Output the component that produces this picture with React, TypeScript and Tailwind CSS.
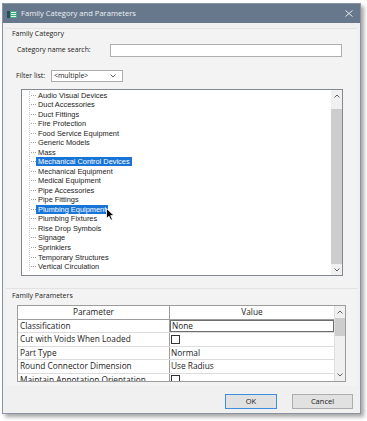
import React from "react";

const categories = [
  "Audio Visual Devices",
  "Duct Accessories",
  "Duct Fittings",
  "Fire Protection",
  "Food Service Equipment",
  "Generic Models",
  "Mass",
  "Mechanical Control Devices",
  "Mechanical Equipment",
  "Medical Equipment",
  "Pipe Accessories",
  "Pipe Fittings",
  "Plumbing Equipment",
  "Plumbing Fixtures",
  "Rise Drop Symbols",
  "Signage",
  "Sprinklers",
  "Temporary Structures",
  "Vertical Circulation",
];

const selected = ["Mechanical Control Devices", "Plumbing Equipment"];

type Param = { name: string; value?: string; check?: boolean; boxed?: boolean };

const params: Param[] = [
  { name: "Classification", value: "None", boxed: true },
  { name: "Cut with Voids When Loaded", check: true },
  { name: "Part Type", value: "Normal" },
  { name: "Round Connector Dimension", value: "Use Radius" },
  { name: "Maintain Annotation Orientation", check: true },
];

const ui = { fontFamily: '"Open Sans", "Noto Sans", sans-serif' };
const tree = { fontFamily: '"Liberation Sans", Arial, sans-serif' };

const Chevron = ({ up }: { up?: boolean }) => (
  <svg width="6" height="4" viewBox="0 0 6 4">
    <path d={up ? "M0.5 3.5 L3 1 L5.5 3.5" : "M0.5 0.5 L3 3 L5.5 0.5"} fill="none" stroke="#606060" strokeWidth="1" />
  </svg>
);

const Checkbox = () => <div className="w-[9px] h-[9px] border border-[#333] bg-white" />;

export default function App() {
  return (
    <div className="relative w-[367px] h-[421px] bg-white overflow-hidden" style={ui}>
      <div className="ml-[2px] mt-[3px] w-[359px] h-[411px] flex flex-col bg-[#f0f0f0] border border-[#8a94a0] shadow-[3px_3px_4px_rgba(0,0,0,0.35)]">
        {/* title bar */}
        <div className="h-[19px] bg-[#67788c] flex items-center pl-[4px] pr-[7px] shrink-0">
          <svg width="10" height="7" viewBox="0 0 10 7" className="mt-[1px]">
            <rect x="0" y="0" width="10" height="7" fill="#3fae7f" />
            <rect x="0" y="0" width="3" height="7" fill="#2b4a63" />
            <rect x="4" y="1" width="5" height="1" fill="#e4f5ec" />
            <rect x="4" y="3" width="5" height="1" fill="#e4f5ec" />
            <rect x="4" y="5" width="5" height="1" fill="#e4f5ec" />
          </svg>
          <span className="ml-[4px] text-[7.6px] text-[#eef1f4] leading-none mt-[1px]">Family Category and Parameters</span>
          <svg width="8" height="7" viewBox="0 0 8 7" className="ml-auto">
            <path d="M0.5 0.5 L7.5 6.5 M7.5 0.5 L0.5 6.5" stroke="#e6eaee" strokeWidth="1" />
          </svg>
        </div>

        {/* family category group */}
        <div className="mt-[5px] mx-[3px] h-[260px] flex flex-col bg-[#f3f3f3] border-t border-[#e2e2e2]">
          <div className="h-[10px] pl-[6px] text-[7px] leading-[10px] text-[#1a1a1a]">Family Category</div>
          <div className="mt-[5px] h-[13px] flex items-center pl-[11px]">
            <span className="w-[93px] text-[6.9px] text-[#1a1a1a]">Category name search:</span>
            <div className="w-[232px] h-[13px] bg-white border border-[#adadad]" />
          </div>
          <div className="mt-[13px] h-[12px] flex items-center pl-[10px]">
            <span className="w-[35px] text-[6.9px] text-[#1a1a1a]">Filter list:</span>
            <div className="w-[72px] h-[12px] bg-white border border-[#adadad] flex items-center pl-[2px] pr-[6px]">
              <span className="text-[6.9px] text-[#1a1a1a]">&lt;multiple&gt;</span>
              <span className="ml-auto flex"><Chevron /></span>
            </div>
          </div>
          <div className="mt-[7px] ml-[15px] w-[322px] h-[187px] flex bg-white border border-[#828790]" style={tree}>
            <div className="flex-1 pt-[0.5px] pl-[7px] overflow-hidden">
              <div className="border-l border-dotted border-[#c8c8c8]">
                {categories.map((c) => {
                  const sel = selected.includes(c);
                  return (
                    <div key={c} className="h-[9.53px] flex items-center">
                      <span className="w-[5px] border-t border-dotted border-[#a0a0a0] ml-[1px]" />
                      <span
                        className={
                          sel
                            ? "h-[9px] leading-[9px] px-[2px] text-[7.4px] bg-[#1874d6] text-white"
                            : "h-[9px] leading-[9px] px-[2px] text-[7.4px] text-[#222]"
                        }
                      >
                        {c}
                      </span>
                    </div>
                  );
                })}
              </div>
            </div>
            <div className="w-[11px] flex flex-col items-center bg-[#f0f0f0]">
              <div className="h-[12px] flex items-center"><Chevron up /></div>
              <div className="mt-[7px] w-[11px] h-[155px] bg-[#cdcdcd]" />
              <div className="h-[11px] flex items-center"><Chevron /></div>
            </div>
          </div>
        </div>

        {/* family parameters group */}
        <div className="mx-[3px] h-[98px] flex flex-col bg-[#f3f3f3] border-t border-[#e2e2e2]">
          <div className="mt-[2px] h-[10px] pl-[6px] text-[7px] leading-[10px] text-[#1a1a1a]">Family Parameters</div>
          <div className="mt-[4px] ml-[11px] w-[329px] h-[77px] flex bg-white border border-[#9c9c9c] overflow-hidden">
            <div className="flex-1 flex flex-col text-[8.3px] text-[#1a1a1a]">
              <div className="h-[14px] shrink-0 flex border-b border-[#9c9c9c]">
                <div className="w-[152px] flex items-center justify-center border-r border-[#9c9c9c]">Parameter</div>
                <div className="flex-1 flex items-center justify-center">Value</div>
              </div>
              {params.map((p) => (
                <div key={p.name} className="h-[13.4px] shrink-0 flex border-b border-[#dcdcdc]">
                  <div className="w-[152px] flex items-center pl-[2px] border-r border-[#9c9c9c] whitespace-nowrap overflow-hidden">
                    {p.name}
                  </div>
                  <div
                    className={
                      p.boxed
                        ? "flex-1 flex items-center pl-[1px] border border-[#6e6e6e]"
                        : "flex-1 flex items-center pl-[1px]"
                    }
                  >
                    {p.check ? <Checkbox /> : p.value}
                  </div>
                </div>
              ))}
            </div>
            <div className="w-[11px] flex flex-col items-center bg-[#f0f0f0] border-l border-[#e0e0e0]">
              <div className="h-[12px] flex items-center"><Chevron up /></div>
              <div className="w-[11px] h-[18px] bg-[#cdcdcd]" />
              <div className="mt-auto h-[12px] flex items-center"><Chevron /></div>
            </div>
          </div>
        </div>

        {/* buttons */}
        <div className="mt-[8px] h-[15px] flex justify-end gap-[15px] pr-[7px] text-[7.5px] text-[#1a1a1a]">
          <div className="w-[52px] h-[15px] flex items-center justify-center bg-[#e1e1e1] border border-[#3d8ee0]">OK</div>
          <div className="w-[61px] h-[15px] flex items-center justify-center bg-[#e1e1e1] border border-[#adadad]">Cancel</div>
        </div>
      </div>

      {/* mouse pointer over the list */}
      <svg width="9" height="13" viewBox="0 0 9 13" className="absolute left-[106px] top-[208px]">
        <path d="M0.5 0.5 L0.5 10.5 L3 8.2 L4.8 12.2 L6.4 11.5 L4.7 7.6 L8 7.6 Z" fill="#000" stroke="#fff" strokeWidth="0.8" />
      </svg>
    </div>
  );
}
